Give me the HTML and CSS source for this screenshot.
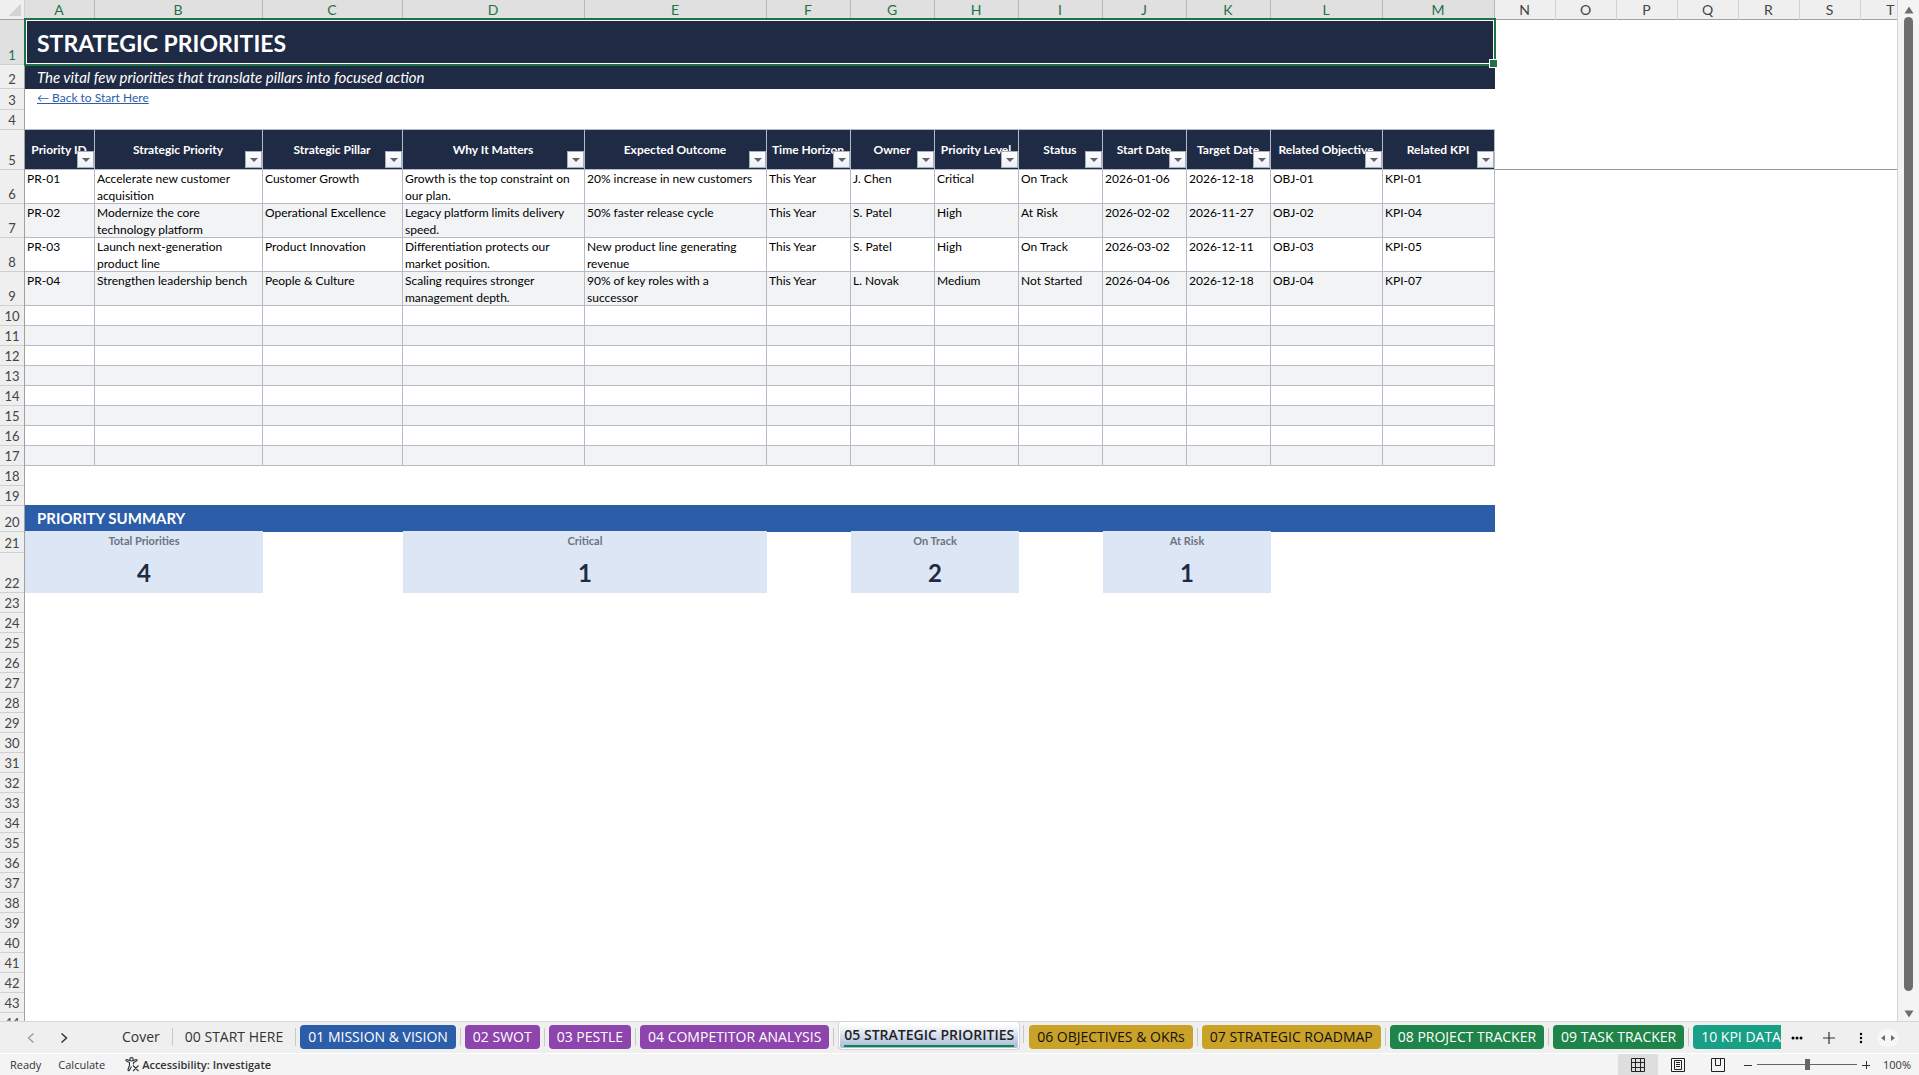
FILE: index.html
```html
<!DOCTYPE html>
<html lang="en">
<head>
  <meta charset="UTF-8">
  <meta name="viewport" content="width=device-width, initial-scale=1.0">
  <title>Strategic Priorities</title>
  <link rel="stylesheet" href="styles.css">
</head>
<body>
  <div class="workspace">
    <main class="sheet">
      <table class="grid">
        <colgroup>
          <col class="w-head"><col class="w-a"><col class="w-b"><col class="w-c"><col class="w-d"><col class="w-d">
          <col class="w-f"><col class="w-f"><col class="w-f"><col class="w-f"><col class="w-f"><col class="w-f">
          <col class="w-l"><col class="w-l">
          <col class="w-n"><col class="w-n"><col class="w-n"><col class="w-n"><col class="w-n"><col class="w-n"><col class="w-n">
        </colgroup>
        <thead>
          <tr class="letters">
            <th class="corner"></th>
            <th class="on">A</th><th class="on">B</th><th class="on">C</th><th class="on">D</th><th class="on">E</th><th class="on">F</th><th class="on">G</th><th class="on">H</th><th class="on">I</th><th class="on">J</th><th class="on">K</th><th class="on">L</th><th class="on">M</th>
            <th>N</th><th>O</th><th>P</th><th>Q</th><th>R</th><th>S</th><th>T</th>
          </tr>
        </thead>
        <tbody>
          <tr class="row-title"><th class="num on">1</th><td class="title" colspan="13"><h1>STRATEGIC PRIORITIES</h1><span class="selection"></span></td></tr>
          <tr class="row-sub"><th class="num">2</th><td class="subtitle" colspan="13">The vital few priorities that translate pillars into focused action</td></tr>
          <tr class="row-link"><th class="num">3</th><td class="back" colspan="13"><a href="#">← Back to Start Here</a></td></tr>
          <tr><th class="num">4</th><td class="above" colspan="13"></td></tr>

          <!-- Table header with filters -->
          <tr class="row-fields">
            <th class="num">5</th>
            <th class="field">Priority ID<button class="filter" aria-label="Filter Priority ID"></button></th>
            <th class="field">Strategic Priority<button class="filter" aria-label="Filter Strategic Priority"></button></th>
            <th class="field">Strategic Pillar<button class="filter" aria-label="Filter Strategic Pillar"></button></th>
            <th class="field">Why It Matters<button class="filter" aria-label="Filter Why It Matters"></button></th>
            <th class="field">Expected Outcome<button class="filter" aria-label="Filter Expected Outcome"></button></th>
            <th class="field">Time Horizon<button class="filter" aria-label="Filter Time Horizon"></button></th>
            <th class="field">Owner<button class="filter" aria-label="Filter Owner"></button></th>
            <th class="field">Priority Level<button class="filter" aria-label="Filter Priority Level"></button></th>
            <th class="field">Status<button class="filter" aria-label="Filter Status"></button></th>
            <th class="field">Start Date<button class="filter" aria-label="Filter Start Date"></button></th>
            <th class="field">Target Date<button class="filter" aria-label="Filter Target Date"></button></th>
            <th class="field">Related Objective<button class="filter" aria-label="Filter Related Objective"></button></th>
            <th class="field">Related KPI<button class="filter" aria-label="Filter Related KPI"></button></th>
            <td class="freeze" colspan="7"></td>
          </tr>

          <tr class="data">
            <th class="num">6</th>
            <td>PR-01</td><td>Accelerate new customer acquisition</td><td>Customer Growth</td><td>Growth is the top constraint on our plan.</td><td>20% increase in new customers</td><td>This Year</td><td>J. Chen</td><td>Critical</td><td>On Track</td><td>2026-01-06</td><td>2026-12-18</td><td>OBJ-01</td><td>KPI-01</td>
          </tr>
          <tr class="data band">
            <th class="num">7</th>
            <td>PR-02</td><td>Modernize the core technology platform</td><td>Operational Excellence</td><td>Legacy platform limits delivery speed.</td><td>50% faster release cycle</td><td>This Year</td><td>S. Patel</td><td>High</td><td>At Risk</td><td>2026-02-02</td><td>2026-11-27</td><td>OBJ-02</td><td>KPI-04</td>
          </tr>
          <tr class="data">
            <th class="num">8</th>
            <td>PR-03</td><td>Launch next-generation product line</td><td>Product Innovation</td><td>Differentiation protects our market position.</td><td>New product line generating revenue</td><td>This Year</td><td>S. Patel</td><td>High</td><td>On Track</td><td>2026-03-02</td><td>2026-12-11</td><td>OBJ-03</td><td>KPI-05</td>
          </tr>
          <tr class="data band">
            <th class="num">9</th>
            <td>PR-04</td><td>Strengthen leadership bench</td><td>People &amp; Culture</td><td>Scaling requires stronger management depth.</td><td>90% of key roles with a successor</td><td>This Year</td><td>L. Novak</td><td>Medium</td><td>Not Started</td><td>2026-04-06</td><td>2026-12-18</td><td>OBJ-04</td><td>KPI-07</td>
          </tr>
          <tr class="blank"><th class="num">10</th><td></td><td></td><td></td><td></td><td></td><td></td><td></td><td></td><td></td><td></td><td></td><td></td><td></td></tr>
          <tr class="blank band"><th class="num">11</th><td></td><td></td><td></td><td></td><td></td><td></td><td></td><td></td><td></td><td></td><td></td><td></td><td></td></tr>
          <tr class="blank"><th class="num">12</th><td></td><td></td><td></td><td></td><td></td><td></td><td></td><td></td><td></td><td></td><td></td><td></td><td></td></tr>
          <tr class="blank band"><th class="num">13</th><td></td><td></td><td></td><td></td><td></td><td></td><td></td><td></td><td></td><td></td><td></td><td></td><td></td></tr>
          <tr class="blank"><th class="num">14</th><td></td><td></td><td></td><td></td><td></td><td></td><td></td><td></td><td></td><td></td><td></td><td></td><td></td></tr>
          <tr class="blank band"><th class="num">15</th><td></td><td></td><td></td><td></td><td></td><td></td><td></td><td></td><td></td><td></td><td></td><td></td><td></td></tr>
          <tr class="blank"><th class="num">16</th><td></td><td></td><td></td><td></td><td></td><td></td><td></td><td></td><td></td><td></td><td></td><td></td><td></td></tr>
          <tr class="blank band"><th class="num">17</th><td></td><td></td><td></td><td></td><td></td><td></td><td></td><td></td><td></td><td></td><td></td><td></td><td></td></tr>
          <tr><th class="num">18</th></tr>
          <tr><th class="num">19</th></tr>

          <!-- Summary -->
          <tr class="row-section"><th class="num">20</th><td class="section" colspan="13"><h2>PRIORITY SUMMARY</h2></td></tr>
          <tr class="row-label">
            <th class="num">21</th>
            <td class="tile" colspan="2">Total Priorities</td><td></td>
            <td class="tile" colspan="2">Critical</td><td></td>
            <td class="tile" colspan="2">On Track</td><td></td>
            <td class="tile" colspan="2">At Risk</td>
          </tr>
          <tr class="row-value">
            <th class="num">22</th>
            <td class="tile" colspan="2">4</td><td></td>
            <td class="tile" colspan="2">1</td><td></td>
            <td class="tile" colspan="2">2</td><td></td>
            <td class="tile" colspan="2">1</td>
          </tr>
          <tr><th class="num">23</th></tr>
          <tr><th class="num">24</th></tr>
          <tr><th class="num">25</th></tr>
          <tr><th class="num">26</th></tr>
          <tr><th class="num">27</th></tr>
          <tr><th class="num">28</th></tr>
          <tr><th class="num">29</th></tr>
          <tr><th class="num">30</th></tr>
          <tr><th class="num">31</th></tr>
          <tr><th class="num">32</th></tr>
          <tr><th class="num">33</th></tr>
          <tr><th class="num">34</th></tr>
          <tr><th class="num">35</th></tr>
          <tr><th class="num">36</th></tr>
          <tr><th class="num">37</th></tr>
          <tr><th class="num">38</th></tr>
          <tr><th class="num">39</th></tr>
          <tr><th class="num">40</th></tr>
          <tr><th class="num">41</th></tr>
          <tr><th class="num">42</th></tr>
          <tr><th class="num">43</th></tr>
          <tr><th class="num">44</th></tr>
        </tbody>
      </table>
    </main>
    <div class="scrollbar">
      <button class="scroll-btn" aria-label="Scroll up"><svg width="10" height="8" viewBox="0 0 10 8"><path d="M5 0.5 9.5 7.5h-9z" fill="#6e6e6e"/></svg></button>
      <div class="thumb"></div>
      <button class="scroll-btn" aria-label="Scroll down"><svg width="10" height="8" viewBox="0 0 10 8"><path d="M5 7.5 0.5 0.5h9z" fill="#6e6e6e"/></svg></button>
    </div>
  </div>

  <nav class="tabbar">
    <div class="tab-nav">
      <button class="icon-btn" aria-label="Previous sheet"><svg width="8" height="12" viewBox="0 0 8 12"><path d="M6.5 1.5 1.5 6l5 4.5" fill="none" stroke="#9a9a9a" stroke-width="1.3"/></svg></button>
      <button class="icon-btn" aria-label="Next sheet"><svg width="8" height="12" viewBox="0 0 8 12"><path d="M1.5 1.5 6.5 6l-5 4.5" fill="none" stroke="#333" stroke-width="1.5"/></svg></button>
    </div>
    <div class="tabs">
      <button class="tab plain">Cover</button>
      <button class="tab plain">00 START HERE</button>
      <button class="tab blue">01 MISSION &amp; VISION</button>
      <button class="tab purple">02 SWOT</button>
      <button class="tab purple">03 PESTLE</button>
      <button class="tab purple">04 COMPETITOR ANALYSIS</button>
      <button class="tab active"><span>05 STRATEGIC PRIORITIES</span></button>
      <button class="tab gold">06 OBJECTIVES &amp; OKRs</button>
      <button class="tab gold">07 STRATEGIC ROADMAP</button>
      <button class="tab green">08 PROJECT TRACKER</button>
      <button class="tab green">09 TASK TRACKER</button>
      <button class="tab teal">10 KPI DATABASE</button>
    </div>
    <div class="tab-tools">
      <button class="tool" aria-label="All sheets"><svg width="12" height="4" viewBox="0 0 12 4"><circle cx="2" cy="2" r="1.5"/><circle cx="6" cy="2" r="1.5"/><circle cx="10" cy="2" r="1.5"/></svg></button>
      <button class="tool" aria-label="New sheet"><svg width="12" height="12" viewBox="0 0 12 12"><path d="M6 0v12M0 6h12" stroke="#333" stroke-width="1.2"/></svg></button>
      <button class="tool" aria-label="Resize tabs"><svg width="4" height="12" viewBox="0 0 4 12"><circle cx="2" cy="2" r="1.2"/><circle cx="2" cy="6" r="1.2"/><circle cx="2" cy="10" r="1.2"/></svg></button>
      <button class="hscroll" aria-label="Scroll sideways"><svg width="16" height="6" viewBox="0 0 16 6"><path d="M5 0v6L1 3zM11 0v6l4-3z" fill="#6e6e6e"/></svg></button>
    </div>
  </nav>

  <footer class="status">
    <span class="ready">Ready</span>
    <span class="calc">Calculate</span>
    <button class="access">
      <svg width="14" height="15" viewBox="0 0 14 15" fill="none" stroke="#333" stroke-width="1.1"><circle cx="6.500" cy="2.300" r="1.700"/><path d="M5 3.800 2 2.600c-1-.3-1.500 1-.6 1.500L4.500 5.500v2.800L3 12.500c-.3 1.200 1.100 1.600 1.600.6L6.500 9.500M8 3.800l3-1.200c1-.3 1.500 1 .6 1.500L8.500 5.500v2M8 8.500l5.500 5.500M13.500 8.500 8 14"/></svg>
      Accessibility: Investigate
    </button>
    <div class="views">
      <button class="view current" aria-label="Normal"><svg width="14" height="14" viewBox="0 0 14 14" fill="none" stroke="#222"><path d="M.5.500h13v13H.5zM.5 4.500h13M.5 9.500h13M4.500.500v13M9.500.500v13"/></svg></button>
      <button class="view" aria-label="Page layout"><svg width="14" height="14" viewBox="0 0 14 14" fill="none" stroke="#222"><path d="M.5.500h13v13H.5zM3.500 2.500h7v9h-7zM5 4.500h4M5 6.500h4M5 8.500h4"/></svg></button>
      <button class="view" aria-label="Page break preview"><svg width="14" height="14" viewBox="0 0 14 14" fill="none" stroke="#222"><path d="M.5.500h13v13H.5zM4.500.500v7h5v-7"/></svg></button>
    </div>
    <div class="zoom">
      <button class="icon-btn" aria-label="Zoom out"><svg width="8" height="8" viewBox="0 0 8 8"><path d="M0 4.500h8" stroke="#333"/></svg></button>
      <input type="range" min="0" max="200" value="100" aria-label="Zoom">
      <button class="icon-btn" aria-label="Zoom in"><svg width="8" height="8" viewBox="0 0 8 8"><path d="M0 4.500h8M4.500 0v8" stroke="#333"/></svg></button>
      <span class="percent">100%</span>
    </div>
  </footer>
</body>
</html>
```
FILE: styles.css
```css
:root {
  --navy: #1f2a44;
  --blue: #2c5da9;
  --tile: #dde6f5;
  --band: #f1f3f5;
  --line: #b4bac6;
  --excel: #1e7245;
  --ui-font: "Open Sans", "Noto Sans", sans-serif;
}
* {
  box-sizing: border-box;
}
body {
  margin: 0;
  height: 100vh;
  display: flex;
  flex-direction: column;
  overflow: hidden;
  background: #efefef;
  font-family: Lato, sans-serif;
  font-size: 12px;
  color: #000;
}
button {
  font: inherit;
  color: inherit;
  border: none;
  background: none;
  padding: 0;
  cursor: pointer;
}
svg {
  display: block;
}
h1, h2 {
  margin: 0;
  font-weight: 700;
}

/* Sheet */
.workspace {
  flex: 1;
  min-height: 0;
  display: flex;
}
.sheet {
  flex: 1;
  min-width: 0;
  overflow: hidden;
  background: #fff;
  border-right: 1px solid #d4d4d4;
}
.grid {
  width: 100%;
  table-layout: fixed;
  border-collapse: separate;
  border-spacing: 0;
}
.w-head { width: 25px; }
.w-a { width: 70px; }
.w-b { width: 168px; }
.w-c { width: 140px; }
.w-d { width: 182px; }
.w-f { width: 84px; }
.w-l { width: 112px; }
.w-n { width: 61px; }
.grid th, .grid td {
  padding: 0;
}
.grid tr {
  height: 20px;
}

.grid .letters th {
  padding-right: 2px;
  background: #efefef;
  box-shadow: inset -1px 0 #d0d0d0, inset 0 -1px #a0a0a0;
  color: #444;
  font-size: 14px;
  font-weight: 400;
  line-height: 20px;
}
.grid .letters .on {
  background: #e0e0e0;
  box-shadow: inset -1px 0 #b8b8b8, inset 0 -1px #a0a0a0;
  color: var(--excel);
}
.grid .letters .corner {
  background: linear-gradient(135deg, transparent 50%, #d4d4d4 50%) 9px 4px / 12px 12px no-repeat #efefef;
}
.grid .num {
  padding-right: 1px;
  background: #efefef;
  box-shadow: inset -1px 0 #a0a0a0, inset 0 -1px #d0d0d0;
  color: #444;
  font-size: 13px;
  font-weight: 400;
  line-height: 20px;
  vertical-align: bottom;
}
.grid .num.on {
  background: #e0e0e0;
  color: var(--excel);
}

.grid .row-title { height: 45px; }
.grid .row-sub { height: 24px; }
.grid .row-link { height: 21px; }
.grid .row-fields { height: 40px; }
.grid .row-section { height: 26px; }
.grid .row-label { height: 21px; }
.grid .row-value { height: 40px; }

.grid .title, .grid .subtitle, .grid .back, .grid .section {
  padding-left: 12px;
}
.title {
  position: relative;
  background: var(--navy);
  color: #fff;
}
.title h1 {
  font-size: 23px;
  line-height: 32px;
}
.selection {
  position: absolute;
  inset: -2px -1px -1px -1px;
  border: 2px solid var(--excel);
  box-shadow: inset 0 0 0 1px #fff;
}
.selection::after {
  content: "";
  position: absolute;
  right: -4px;
  bottom: -4px;
  width: 7px;
  height: 7px;
  background: var(--excel);
  border: 1px solid #fff;
}
.subtitle {
  background: var(--navy);
  color: #fff;
  font-size: 15px;
  font-style: italic;
  line-height: 20px;
}
.back {
  vertical-align: top;
  line-height: 18px;
}
.back a {
  color: var(--blue);
}
.above {
  box-shadow: inset 0 -1px var(--line);
}
.field {
  position: relative;
  background: var(--navy);
  box-shadow: inset -1px -1px var(--line);
  color: #fff;
  font-weight: 700;
  white-space: nowrap;
}
.grid .field {
  padding: 0 2px 2px 0;
}
.filter {
  position: absolute;
  right: 1px;
  bottom: 2px;
  width: 17px;
  height: 17px;
  border: 1px solid #a6afc0;
  background: linear-gradient(#fff, #eceff5);
}
.filter::after {
  content: "";
  position: absolute;
  left: 4px;
  top: 6px;
  border: 4px solid transparent;
  border-top-color: #5f6368;
  border-bottom: none;
}
.freeze {
  box-shadow: inset 0 -1px #999;
}
.grid .data { height: 34px; }
.data td {
  vertical-align: top;
  line-height: 17px;
}
.grid .data td {
  padding: 0 6px 0 2px;
}
.data td, .blank td {
  box-shadow: inset -1px -1px var(--line);
}
.band td {
  background: var(--band);
}

.section {
  background: var(--blue);
  box-shadow: 0 -1px var(--blue);
  color: #fff;
  vertical-align: top;
}
.section h2 {
  font-size: 15px;
  line-height: 24px;
}
.tile {
  background: var(--tile);
  text-align: center;
}
.row-label .tile {
  box-shadow: 0 -1px var(--tile);
  color: #6b7280;
  font-size: 11px;
  font-weight: 700;
  line-height: 18px;
  vertical-align: top;
}
.row-value .tile {
  color: var(--navy);
  font-size: 24px;
  font-weight: 700;
  line-height: 32px;
}

.scrollbar {
  width: 21px;
  padding-top: 2px;
  display: flex;
  flex-direction: column;
  align-items: center;
  background: #f4f4f4;
}
.scroll-btn {
  height: 15px;
  display: flex;
  align-items: center;
}
.thumb {
  flex: 1;
  width: 9px;
  margin-bottom: 15px;
  border-radius: 5px;
  background: #6e6e6e;
}

/* Sheet tabs */
.tabbar {
  height: 32px;
  display: flex;
  border-top: 1px solid #d6d6d6;
  font-family: var(--ui-font);
  font-size: 14px;
}
.tab-nav {
  width: 110px;
  padding: 0 42px 0 27px;
  display: flex;
  align-items: center;
  justify-content: space-between;
}
.tabs {
  flex: 1;
  min-width: 0;
  display: flex;
  align-items: flex-start;
  overflow: hidden;
}
.tab {
  position: relative;
  flex: none;
  height: 24px;
  margin: 3px 5px 0 4px;
  padding: 0 8px;
  border-radius: 4px;
  line-height: 24px;
  white-space: nowrap;
  color: #fff;
}
.tab::after {
  content: "";
  position: absolute;
  right: -5px;
  top: 3px;
  width: 1px;
  height: 18px;
  background: #c8c8c8;
}
.plain { color: #333; }
.blue { background: var(--blue); }
.purple { background: #8e44ad; }
.gold { background: #c9a227; color: #111; }
.green { background: #1e8449; }
.teal { background: #17a085; }
.active {
  height: 28px;
  margin-top: 0;
  padding: 0 5px;
  border: 1px solid #d6d6d6;
  border-top: none;
  background: linear-gradient(#fff 10%, #a3b5d9);
  box-shadow: inset 0 0 0 1px #fff;
  color: #222;
  font-weight: 600;
  line-height: 21px;
}
.active span {
  display: block;
  border-bottom: 2px solid #128542;
}
.tab-tools {
  padding-right: 20px;
  display: flex;
  align-items: center;
}
.tool {
  width: 32px;
  height: 24px;
  display: flex;
  align-items: center;
  justify-content: center;
}
.hscroll {
  width: 22px;
  height: 18px;
  display: flex;
  align-items: center;
  justify-content: center;
  border-radius: 9px;
  background: #f7f7f7;
}

/* Status bar */
.status {
  height: 22px;
  display: flex;
  align-items: center;
  background: #f4f4f4;
  border-top: 1px solid #fff;
  font-family: var(--ui-font);
  font-size: 11px;
  color: #333;
}
.ready {
  margin-left: 10px;
}
.calc {
  margin-left: 17px;
}
.access {
  margin-left: 20px;
  display: flex;
  align-items: center;
  gap: 3px;
  font-weight: 600;
}
.views {
  margin-left: auto;
  display: flex;
}
.view {
  width: 40px;
  height: 21px;
  display: flex;
  align-items: center;
  justify-content: center;
}
.current {
  background: #dedede;
}
.zoom {
  margin-left: 6px;
  display: flex;
  align-items: center;
}
.zoom input {
  appearance: none;
  width: 100px;
  height: 12px;
  margin: 0 5px;
  background: linear-gradient(#666, #666) center / 100% 1px no-repeat;
}
.zoom input::-webkit-slider-thumb {
  appearance: none;
  width: 5px;
  height: 11px;
  background: #666;
}
.percent {
  margin: 0 8px 0 13px;
}
```
